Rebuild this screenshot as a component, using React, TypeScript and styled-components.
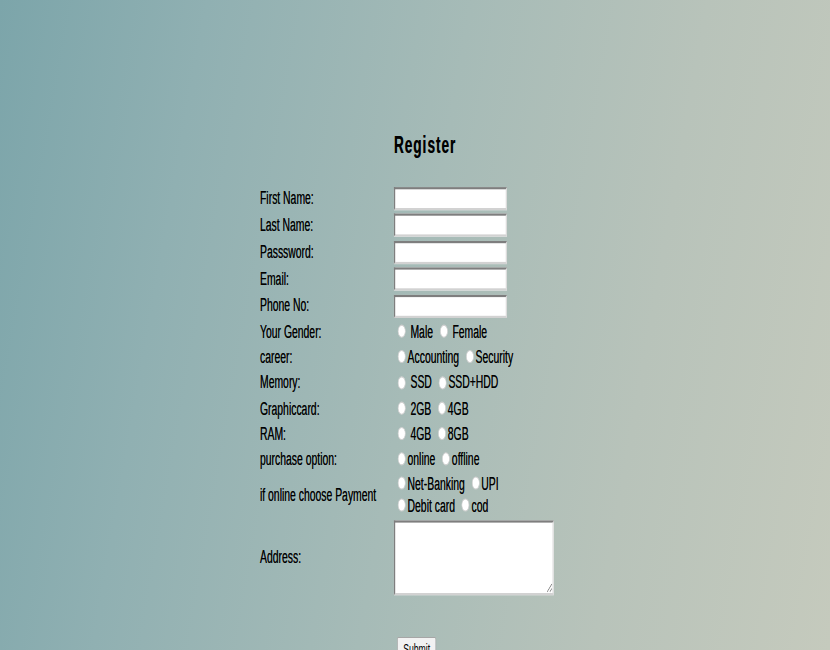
import React from "react";
import styled, { createGlobalStyle } from "styled-components";

const GlobalStyle = createGlobalStyle`
  html, body {
    margin: 0;
    padding: 0;
    height: 100%;
    overflow: hidden;
  }
  body {
    font-family: "Liberation Sans", Arial, sans-serif;
    color: #000;
  }
`;

const Page = styled.div`
  box-sizing: border-box;
  width: 830px;
  height: 650px;
  padding: 120px 0 0 260px;
  background: linear-gradient(100deg, #7ca5aa 0%, #90b0b2 22%, #a6bbb7 50%, #b8c3ba 75%, #c5cabd 100%);
  overflow: hidden;
`;

/* The reference is a horizontally squeezed capture: the sheet is laid out
   at its native size and scaled as a whole. */
const Sheet = styled.form`
  width: 470px;
  transform: scale(0.65, 1.1);
  transform-origin: 0 0;
  font-size: 16px;
  line-height: 18.4px;
  text-shadow: 0 0 0.3px rgba(0, 0, 0, 0.6);
`;

const Title = styled.h2`
  margin: 0 0 24.4px;
  padding: 10.7px 0 0 206px;
  font-size: 21px;
  line-height: 24px;
  font-weight: 700;
  letter-spacing: 1.5px;
`;

const Row = styled.div<{ $h: number }>`
  display: grid;
  grid-template-columns: 206px 1fr;
  align-items: center;
  height: ${(p) => p.$h}px;
`;

const Label = styled.label`
  white-space: nowrap;
`;

const Field = styled.div`
  white-space: nowrap;
`;

const Line = styled.div<{ $lh: number }>`
  line-height: ${(p) => p.$lh}px;
  white-space: nowrap;
`;

const TextInput = styled.input`
  box-sizing: border-box;
  display: block;
  width: 174px;
  height: 21px;
  margin: 0;
  padding: 1px 2px;
  background: #fff;
  border-style: solid;
  border-width: 2px;
  border-color: #7e7e7e #dcdcdc #d2d2d2 #7e7e7e;
  font: inherit;
  outline: none;
`;

const Radio = styled.input`
  appearance: none;
  -webkit-appearance: none;
  box-sizing: border-box;
  width: 12px;
  height: 12px;
  margin: 0 3px 3px 6px;
  border-radius: 50%;
  background: #fff;
  border: 1px solid #d0d0d0;
  vertical-align: middle;
`;

const AddressBox = styled.textarea`
  box-sizing: border-box;
  display: block;
  width: 246px;
  height: 67.3px;
  margin: 0;
  padding: 2px;
  background: #fff;
  border-style: solid;
  border-width: 2px;
  border-color: #7e7e7e #dcdcdc #d2d2d2 #7e7e7e;
  font: 13px "Liberation Mono", monospace;
  outline: none;
`;

const SubmitButton = styled.button`
  box-sizing: border-box;
  display: block;
  margin: 35.6px 0 0 211px;
  width: 60px;
  height: 21px;
  padding: 1px 6px;
  font: 13.33px "Liberation Sans", Arial, sans-serif;
  color: #000;
  background: #f2f2f2;
  border: 1px solid #a6a6a6;
  border-radius: 2px;
`;

const textRows = [
  { label: "First Name:", type: "text" },
  { label: "Last Name:", type: "text" },
  { label: "Passsword:", type: "password" },
  { label: "Email:", type: "email" },
  { label: "Phone No:", type: "tel" },
];

type Opt = { text: string; spaced?: boolean };
const radioRows: { label: string; name: string; options: Opt[] }[] = [
  { label: "Your Gender:", name: "gender", options: [{ text: "Male", spaced: true }, { text: "Female", spaced: true }] },
  { label: "career:", name: "career", options: [{ text: "Accounting" }, { text: "Security" }] },
  { label: "Memory:", name: "memory", options: [{ text: "SSD", spaced: true }, { text: "SSD+HDD" }] },
  { label: "Graphiccard:", name: "gpu", options: [{ text: "2GB", spaced: true }, { text: "4GB" }] },
  { label: "RAM:", name: "ram", options: [{ text: "4GB", spaced: true }, { text: "8GB" }] },
  { label: "purchase option:", name: "purchase", options: [{ text: "online" }, { text: "offline" }] },
];

function Options({ name, options }: { name: string; options: Opt[] }) {
  return (
    <>
      {options.map((o, i) => (
        <React.Fragment key={o.text}>
          {i > 0 ? " " : null}
          <Radio type="radio" name={name} />
          {o.spaced ? " " : ""}
          {o.text}
        </React.Fragment>
      ))}
    </>
  );
}

export default function App() {
  return (
    <>
      <GlobalStyle />
      <Page>
        <Sheet onSubmit={(e) => e.preventDefault()}>
          <Title>Register</Title>
          {textRows.map((r) => (
            <Row $h={24.5} key={r.label}>
              <Label>{r.label}</Label>
              <Field>
                <TextInput type={r.type} />
              </Field>
            </Row>
          ))}
          {radioRows.map((r) => (
            <Row $h={23.2} key={r.label}>
              <Label>{r.label}</Label>
              <Field>
                <Options name={r.name} options={r.options} />
              </Field>
            </Row>
          ))}
          <Row $h={40.9}>
            <Label>if online choose Payment</Label>
            <Field>
              <Line $lh={20}>
                <Options name="pay" options={[{ text: "Net-Banking" }, { text: "UPI" }]} />
              </Line>
              <Line $lh={20}>
                <Options name="pay" options={[{ text: "Debit card" }, { text: "cod" }]} />
              </Line>
            </Field>
          </Row>
          <Row $h={72.7}>
            <Label>Address:</Label>
            <Field>
              <AddressBox />
            </Field>
          </Row>
          <SubmitButton type="submit">Submit</SubmitButton>
        </Sheet>
      </Page>
    </>
  );
}
